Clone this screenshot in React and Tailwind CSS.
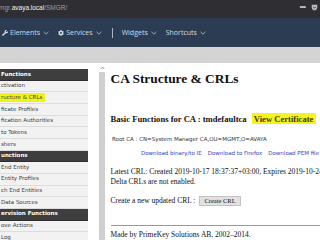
import React from "react";
import { FaWrench, FaCog } from "react-icons/fa";

function Chev() {
  return (
    <svg width="6" height="4" viewBox="0 0 6 4" className="ml-[3px] mt-[1px]">
      <path d="M0.5 0.8 L3 3.2 L5.5 0.8" fill="none" stroke="#b8c2cf" strokeWidth="0.8" />
    </svg>
  );
}

const rows = [
  { t: "Functions", h: true },
  { t: "ctivation" },
  { t: "ructure & CRLs", hl: true },
  { t: "ficate Profiles" },
  { t: "fication Authorities" },
  { t: "to Tokens" },
  { t: "shers" },
  { t: "unctions", h: true },
  { t: "End Entity" },
  { t: "Entity Profiles" },
  { t: "ch End Entities" },
  { t: "Data Sources" },
  { t: "ervision Functions", h: true },
  { t: "ove Actions" },
  { t: "Log" },
];

export default function App() {
  return (
    <div className="w-[320px] h-[240px] overflow-hidden bg-white flex flex-col">
      {/* URL bar */}
      <div className="h-[18px] shrink-0 bg-[#2f2f33] flex items-center justify-between pr-[2px] font-['Liberation_Sans',sans-serif] text-[6.5px] leading-none">
        <div className="ml-[-1px] mt-[-2px]">
          <span className="text-[#9c9ca0]">mgr.</span>
          <span className="text-[#f2f2f2]">avaya.local</span>
          <span className="text-[#9c9ca0]">/SMGR/</span>
        </div>
        <div className="flex items-center gap-[6px] mt-[-4px]">
          <span className="text-[#c8c8c8] text-[8px] tracking-[-1px]">•••</span>
          <svg width="7" height="7" viewBox="0 0 10 10">
            <path d="M1 1 H9 V4.5 C9 7 7 9 5 9 C3 9 1 7 1 4.5 Z" fill="#bdbdc2" />
            <path d="M3 4 L5 6 L7 4" fill="none" stroke="#2f2f33" strokeWidth="1.3" />
          </svg>
        </div>
      </div>

      {/* Nav bar */}
      <div className="h-[29px] shrink-0 bg-[#2c3d53] flex items-center font-['Open_Sans',sans-serif] text-[7px] text-[#d3dae3] leading-none">
        <div className="flex items-center ml-[2px]">
          <FaWrench className="w-[6px] h-[6px] text-[#d3dae3] mr-[2px]" />
          <span>Elements</span>
          <Chev />
        </div>
        <div className="flex items-center ml-[9px]">
          <FaCog className="w-[6px] h-[6px] text-[#d3dae3] mr-[2px]" />
          <span>Services</span>
          <Chev />
        </div>
        <div className="w-[1px] h-[10px] bg-[#aab4c0] ml-[10px]" />
        <div className="flex items-center ml-[9px]">
          <span>Widgets</span>
          <Chev />
        </div>
        <div className="flex items-center ml-[9px]">
          <span>Shortcuts</span>
          <Chev />
        </div>
      </div>

      {/* gray band */}
      <div className="h-[16px] shrink-0 bg-[#d4d4d4]" />

      {/* body */}
      <div className="flex flex-1 min-h-0">
        {/* left frame */}
        <div className="w-[106px] shrink-0 flex">
          <div className="w-[88px] pt-[6px] font-['DejaVu_Sans',sans-serif] text-[5.5px] leading-none">
            {rows.map((r, i) => (
              <div
                key={i}
                className={
                  r.h
                    ? "h-[11.67px] bg-[#3e3e3e] text-white font-bold flex items-center pl-[1px] border-b border-[#2e2e2e]"
                    : "h-[11.67px] bg-[#f2f2f2] text-[#3a3a3a] flex items-center pl-[1px] border-b border-[#dcdcdc]"
                }
              >
                {r.hl ? (
                  <span className="bg-[#f2f21a] ml-[-1px] pl-[1px] pr-[3px] py-[1.5px]">{r.t}</span>
                ) : (
                  <span>{r.t}</span>
                )}
              </div>
            ))}
          </div>
          <div className="w-[10px]" />
          <div className="w-[8px] flex flex-col items-center pt-[3px]">
            <svg width="5" height="4" viewBox="0 0 6 4">
              <path d="M0.8 3.2 L3 1 L5.2 3.2" fill="none" stroke="#707070" strokeWidth="0.9" />
            </svg>
            <div className="mt-[2px] w-[6px] flex-1 bg-[#cfcfcf]" />
          </div>
        </div>

        {/* main frame */}
        <div className="flex-1 pl-[4.5px] font-['Liberation_Serif',serif] text-[#111]">
          <div className="mt-[8.9px] text-[13.4px] leading-[13.6px] font-bold whitespace-nowrap">CA Structure &amp; CRLs</div>
          <div className="mt-[29.3px] text-[8.6px] leading-[8.6px] font-bold whitespace-nowrap">
            Basic Functions for CA : tmdefaultca{" "}
            <span className="bg-[#f4f41c] ml-[3px] pl-[2px] pr-[3px] py-[0.5px] text-[#3d3810]">View Certificate</span>
          </div>
          <div className="mt-[12.7px] ml-[1.5px] font-['DejaVu_Sans',sans-serif] text-[5.5px] leading-[6px] text-[#333] whitespace-nowrap">
            Root CA : CN=System Manager CA,OU=MGMT,O=AVAYA
          </div>
          <div className="mt-[8px] ml-[30.5px] flex gap-[6px] font-['DejaVu_Sans',sans-serif] text-[5.5px] leading-[6px] text-[#3344bb] whitespace-nowrap">
            <span>Download binary/to IE</span>
            <span>Download to Firefox</span>
            <span>Download PEM file</span>
          </div>
          <div className="mt-[10.6px] text-[7.5px] leading-[10.5px] whitespace-nowrap">
            <div>Latest CRL: Created 2019-10-17 18:37:37+03:00, Expires 2019-10-24 18:37:37+03:00.</div>
            <div>Delta CRLs are not enabled.</div>
          </div>
          <div className="mt-[8.3px] h-[10px] flex items-center text-[7.5px] leading-[10px] whitespace-nowrap">
            <span>Create a new updated CRL :</span>
            <span className="ml-[4px] h-[10px] px-[4px] bg-[#e1e1e1] border border-[#c4c4c4] text-[6.5px] leading-[8px] flex items-center">Create CRL</span>
          </div>
          <div className="mt-[19.5px] h-[1px] bg-[#9a9a9a]" />
          <div className="mt-[4.2px] text-[7.5px] leading-[7.5px] whitespace-nowrap">Made by PrimeKey Solutions AB, 2002–2014.</div>
        </div>
      </div>
    </div>
  );
}
